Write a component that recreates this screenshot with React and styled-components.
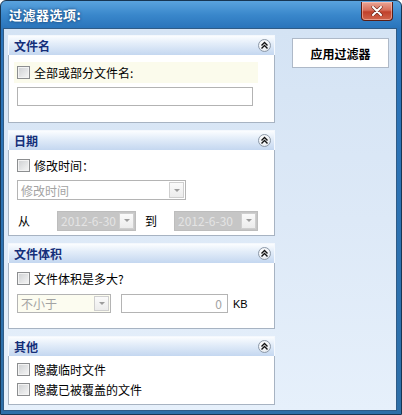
import React from 'react';
import styled, { createGlobalStyle } from 'styled-components';

const Global = createGlobalStyle`
  html, body { margin: 0; padding: 0; }
  body {
    width: 402px; height: 415px; overflow: hidden;
    font-family: "Noto Sans CJK SC", "Liberation Sans", sans-serif;
    font-size: 12px; color: #000;
  }
  * { box-sizing: border-box; }
`;

const Window = styled.div`
  width: 402px; height: 415px;
  display: flex; flex-direction: column;
  background: linear-gradient(to bottom, #5aa3de 0px, #3987cb 14px, #2a74bb 27px, #2d6fa8 100%);
  border: 1px solid #173552;
  border-radius: 6px 6px 0 0;
  padding: 0 4px 3px 2px;
`;

const TitleBar = styled.div`
  height: 27px; flex: none;
  display: flex; align-items: center; justify-content: space-between;
  padding-left: 6px;
  position: relative;
`;

const TitleText = styled.span`
  color: #fff; font-weight: bold; font-size: 13px;
  text-shadow: 0 0 3px rgba(0, 30, 70, 0.8);
  letter-spacing: 0.5px;
`;

const CloseButton = styled.div`
  position: absolute; right: 4px; top: 1px;
  width: 32px; height: 19px;
  border: 1px solid #5a1d14; border-top: none;
  border-radius: 0 0 4px 4px;
  background: linear-gradient(to bottom, #e9a596 0%, #d66f5b 45%, #c0412b 55%, #d0654c 100%);
  box-shadow: inset 0 0 0 1px rgba(255, 210, 200, 0.5);
  display: flex; align-items: center; justify-content: center;
`;

const Client = styled.div`
  flex: 1;
  display: flex;
  border: 1px solid #2f5b86;
  background: linear-gradient(to bottom, #d4e3f4 0%, #dde9f7 50%, #e6f0fb 100%);
  padding: 6px 0 4px 4px;
`;

const LeftColumn = styled.div`
  width: 267px; flex: none;
  display: flex; flex-direction: column; gap: 7px;
`;

const RightColumn = styled.div`
  flex: 1;
  padding: 3px 0 0 17px;
`;

const ApplyButton = styled.button`
  width: 97px; height: 30px;
  border: 1px solid #aeb9c8;
  background: #fff;
  font-family: inherit; font-size: 12px; font-weight: bold; color: #000;
  padding: 0;
`;

const Section = styled.section`
  display: flex; flex-direction: column;
`;

const SectionHeader = styled.div`
  height: 20px;
  display: flex; align-items: center; justify-content: space-between;
  padding: 0 3px 0 5px;
  background: linear-gradient(to bottom, #fbfdff 0%, #e3edf9 40%, #c4d7f0 100%);
  border: 1px solid #f4f8fd; border-bottom: none;
  font-weight: bold; color: #142f7a; font-size: 12px;
`;

const CollapseIcon = styled.div`
  width: 13px; height: 13px; border-radius: 50%;
  border: 1px solid #8d99a8;
  background: radial-gradient(circle at 40% 35%, #ffffff 0%, #eef1f5 60%, #d3d9e2 100%);
  display: flex; align-items: center; justify-content: center;
`;

const SectionBody = styled.div`
  height: ${p => p.$h}px;
  background: #fff;
  border: 1px solid #a7b3c2; border-top: none;
  padding: ${p => p.$pt}px 0 0 5px;
  display: flex; flex-direction: column;
`;

const CheckRow = styled.div`
  height: ${p => p.$h || 21}px;
  width: 244px;
  display: flex; align-items: center; gap: 4px;
  padding-left: 3px;
  background: ${p => (p.$hl ? '#fbfbec' : 'transparent')};
`;

const Box = styled.span`
  width: 13px; height: 13px; flex: none;
  border: 1px solid #8c8e90;
  background: linear-gradient(135deg, #cdcfd1 0%, #e6e7e8 60%, #f6f6f6 100%);
  box-shadow: inset 0 0 0 1px #f3f3f3;
`;

const TextInput = styled.div`
  margin: ${p => p.$mt || 0}px 0 0 3px;
  width: ${p => p.$w}px; height: 19px;
  border: 1px solid #b3b3b3;
  background: #fff;
`;

const Combo = styled.div`
  margin: ${p => p.$mt || 0}px 0 0 ${p => p.$ml || 0}px;
  width: ${p => p.$w}px; height: ${p => p.$hh || 20}px;
  border: 1px solid ${p => (p.$gray ? '#bdbdbd' : '#b4b4b4')};
  background: ${p => p.$bg || '#fff'};
  display: flex; align-items: center; justify-content: space-between;
  padding: 1px;
  color: ${p => (p.$gray ? '#e4e4e4' : '#a3a3a3')};
  font-size: 12px;
  flex: none;
`;

const ComboText = styled.span`
  padding-left: 2px;
  white-space: nowrap;
`;

const ArrowBtn = styled.span`
  width: 15px; height: 100%;
  border: 1px solid #cfcfcf;
  background: linear-gradient(to bottom, #fafafa, #ececec);
  display: flex; align-items: center; justify-content: center;
`;

const Arrow = styled.span`
  width: 0; height: 0;
  border-left: 3px solid transparent;
  border-right: 3px solid transparent;
  border-top: 3px solid #9c9c9c;
`;

const InlineRow = styled.div`
  display: flex; align-items: center;
  margin-top: ${p => p.$mt}px;
  padding-left: ${p => p.$pl || 0}px;
  height: 21px;
`;

const RowLabel = styled.span`
  width: ${p => p.$w}px; flex: none;
  padding-left: ${p => p.$pl || 0}px;
`;

const NumberInput = styled.div`
  margin-left: 10px;
  width: 107px; height: 19px;
  border: 1px solid #b4b4b4; background: #fff;
  color: #a3a3a3; text-align: right; padding-right: 5px;
  line-height: 17px;
`;

const Unit = styled.span`
  margin-left: 5px; font-family: "Liberation Sans", sans-serif; font-size: 11px;
`;

function Chevrons() {
  return (
    <svg width="9" height="9" viewBox="0 0 9 9">
      <path d="M1.5 4.5 L4.5 1.5 L7.5 4.5 M1.5 7.5 L4.5 4.5 L7.5 7.5" fill="none" stroke="#111" strokeWidth="1.4" />
    </svg>
  );
}

function Panel({ title, h, pt, children }) {
  return (
    <Section>
      <SectionHeader>
        <span>{title}</span>
        <CollapseIcon><Chevrons /></CollapseIcon>
      </SectionHeader>
      <SectionBody $h={h} $pt={pt}>{children}</SectionBody>
    </Section>
  );
}

function Check({ label, hl, h }) {
  return (
    <CheckRow $hl={hl} $h={h}>
      <Box />
      <span>{label}</span>
    </CheckRow>
  );
}

function Dropdown({ text, w, mt, ml, bg, gray, hh }) {
  return (
    <Combo $w={w} $mt={mt} $ml={ml} $bg={bg} $gray={gray} $hh={hh}>
      <ComboText>{text}</ComboText>
      <ArrowBtn><Arrow /></ArrowBtn>
    </Combo>
  );
}

export default function App() {
  return (
    <>
      <Global />
      <Window>
        <TitleBar>
          <TitleText>过滤器选项:</TitleText>
          <CloseButton>
            <svg width="12" height="10" viewBox="0 0 12 10">
              <path d="M2 1 L10 9 M10 1 L2 9" stroke="#6b2b20" strokeWidth="3.2" strokeLinecap="round" />
              <path d="M2 1 L10 9 M10 1 L2 9" stroke="#fff" strokeWidth="2" strokeLinecap="round" />
            </svg>
          </CloseButton>
        </TitleBar>
        <Client>
          <LeftColumn>
            <Panel title="文件名" h={68} pt={7}>
              <Check label="全部或部分文件名:" hl />
              <TextInput $w={236} $mt={4} />
            </Panel>
            <Panel title="日期" h={86} pt={5}>
              <Check label="修改时间：" />
              <Dropdown text="修改时间" w={169} mt={4} ml={3} />
              <InlineRow $mt={10} $pl={4}>
                <RowLabel $w={39}>从</RowLabel>
                <Dropdown text="2012-6-30" w={79} bg="#c6c6c6" gray />
                <RowLabel $w={38} $pl={9}>到</RowLabel>
                <Dropdown text="2012-6-30" w={84} bg="#c6c6c6" gray />
              </InlineRow>
            </Panel>
            <Panel title="文件体积" h={66} pt={5}>
              <Check label="文件体积是多大?" />
              <InlineRow $mt={4} $pl={3}>
                <Dropdown text="不小于" w={94} bg="#fcfcf0" hh={19} />
                <NumberInput>0</NumberInput>
                <Unit>KB</Unit>
              </InlineRow>
            </Panel>
            <Panel title="其他" h={49} pt={3}>
              <Check label="隐藏临时文件" h={20} />
              <Check label="隐藏已被覆盖的文件" h={20} />
            </Panel>
          </LeftColumn>
          <RightColumn>
            <ApplyButton>应用过滤器</ApplyButton>
          </RightColumn>
        </Client>
      </Window>
    </>
  );
}
